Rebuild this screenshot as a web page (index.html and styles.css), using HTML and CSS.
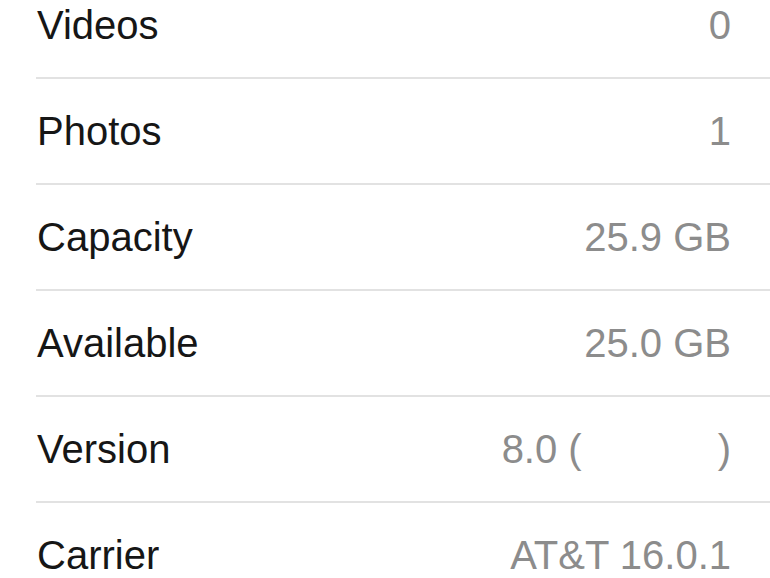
FILE: index.html
```html
<!DOCTYPE html>
<html>
<head>
<meta charset="utf-8">
<link rel="stylesheet" href="styles.css">
</head>
<body>
<div class="list">
  <div class="row"><span class="label">Videos</span><span class="value">0</span></div>
  <div class="row"><span class="label">Photos</span><span class="value">1</span></div>
  <div class="row"><span class="label">Capacity</span><span class="value">25.9 GB</span></div>
  <div class="row"><span class="label">Available</span><span class="value">25.0 GB</span></div>
  <div class="row"><span class="label">Version</span><span class="value">8.0 (<span class="blank"></span>)</span></div>
  <div class="row"><span class="label">Carrier</span><span class="value">AT&amp;T 16.0.1</span></div>
</div>
</body>
</html>
```
FILE: styles.css
```css
html, body {
  margin: 0;
  padding: 0;
  background: #ffffff;
  overflow: hidden;
}
body {
  width: 770px;
  height: 578px;
  font-family: "Liberation Sans", Arial, sans-serif;
}
.list {
  margin-top: -27px;
}
.row {
  display: flex;
  justify-content: space-between;
  align-items: center;
  height: 104px;
  line-height: 104px;
  margin-left: 36px;
  padding-left: 1px;
  padding-right: 39px;
  border-bottom: 2px solid #e2e2e2;
  font-size: 40px;
}
.label {
  color: #161616;
}
.value {
  color: #8c8c8c;
  white-space: nowrap;
}
.blank {
  display: inline-block;
  width: 136px;
}
```
